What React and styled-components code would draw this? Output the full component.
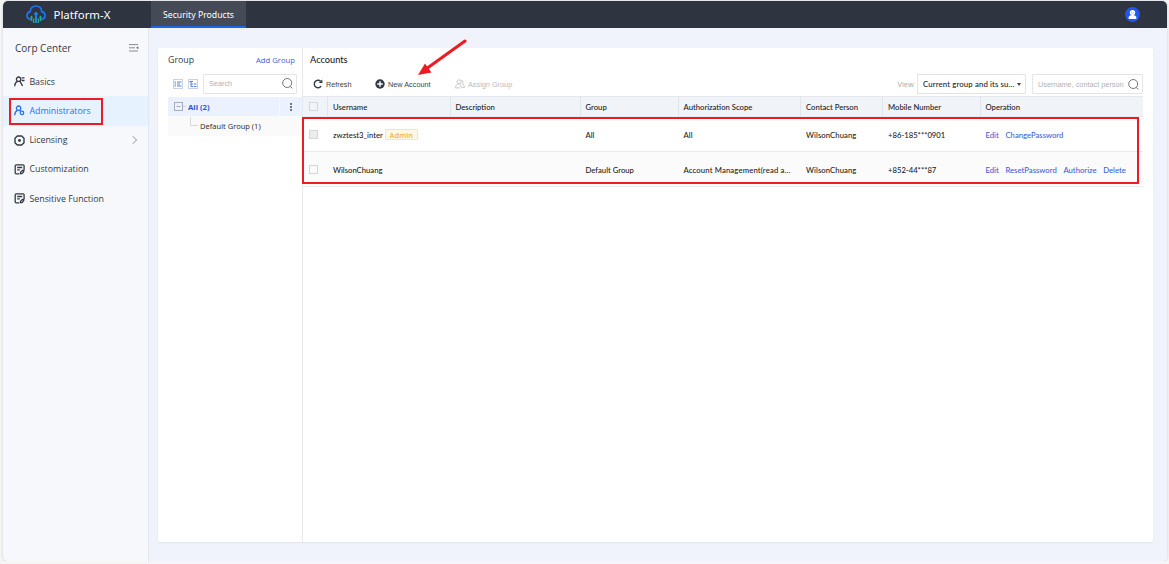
import styled, { createGlobalStyle, css } from "styled-components";

const menu = [
  { name: "Basics", icon: "basics" },
  { name: "Administrators", icon: "admin", active: true },
  { name: "Licensing", icon: "license", more: true },
  { name: "Customization", icon: "note" },
  { name: "Sensitive Function", icon: "note" },
];

const headers = [
  "Username",
  "Description",
  "Group",
  "Authorization Scope",
  "Contact Person",
  "Mobile Number",
  "Operation",
];

const accounts = [
  {
    username: "zwztest3_inter",
    admin: true,
    group: "All",
    scope: "All",
    contact: "WilsonChuang",
    mobile: "+86-185***0901",
    actions: ["Edit", "ChangePassword"],
  },
  {
    username: "WilsonChuang",
    group: "Default Group",
    scope: "Account Management(read a...",
    contact: "WilsonChuang",
    mobile: "+852-44***87",
    actions: ["Edit", "ResetPassword", "Authorize", "Delete"],
  },
];

const Logo = () => (
  <svg width="20" height="19" viewBox="0 0 20 19" fill="none">
    <path
      d="M4.500 14.300C2.300 13.900 1 12.400 1 10.400c0-2 1.300-3.400 3.200-3.800C4.600 3.200 6.800 1 10 1s5.400 2.200 5.800 5.600c1.900.4 3.200 1.800 3.200 3.800s-1.300 3.500-3.500 3.900"
      stroke="#1f74f5"
      strokeWidth="1.700"
      strokeLinecap="round"
    />
    <path d="M10 18V9" stroke="#2388ee" strokeWidth="1.900" />
    <path d="M7.300 9.600 10 6.600l2.700 3z" fill="#2080f5" />
    <path d="M5.500 16v-4M14.500 16v-4M7.600 18v-4.500M12.400 18v-4.500" stroke="#22a884" strokeWidth="1.500" />
    <path d="m3.700 12.400 1.800-2 1.800 2zM12.700 12.400l1.800-2 1.800 2z" fill="#22b07e" />
  </svg>
);

const MenuIcon = ({ type }) => (
  <svg width="11" height="11" viewBox="0 0 11 11" fill="none" stroke="currentColor" strokeWidth="1.300">
    {(type === "basics" || type === "admin") && (
      <>
        <circle cx="4.600" cy="3.200" r="2.200" />
        <path d="M.8 9.800c0-2.300 1-3.700 2.700-4.400" strokeLinecap="round" />
      </>
    )}
    {type === "basics" && <path d="M7.700 1.900H10.500M7.700 4.500H10.500M5.900 5.300l2.700 4.500" />}
    {type === "admin" && (
      <>
        <path d="M5.500 5.400l1 1" />
        <circle cx="8" cy="7.900" r="1.700" />
      </>
    )}
    {type === "license" && (
      <>
        <path d="M3.300 1h4.400L10 3.300v4.400L7.700 10H3.300L1 7.700V3.300z" strokeWidth="1.400" strokeLinejoin="round" />
        <circle cx="5.500" cy="5.500" r="1.400" fill="currentColor" stroke="none" />
      </>
    )}
    {type === "note" && (
      <>
        <path d="M5 9.800H2.200q-1 0-1-1v-7q0-1 1-1h6.900q1 0 1 1v4" strokeLinecap="round" />
        <path d="M3.200 3.500h5M3.200 5.800h2.600" />
        <path d="M6.500 9.700v-1.500l2-1.700h1.200v1.300L8 9.700z" />
      </>
    )}
  </svg>
);

const CollapseIcon = () => (
  <svg width="10" height="8" viewBox="0 0 10 8" stroke="#686e78" strokeWidth=".8">
    <path d="M0 .6h9M0 3.800h6M0 7h9" />
    <path d="M9.300 2.300v3L7 3.800z" fill="#686e78" stroke="none" />
  </svg>
);

const SearchIcon = () => (
  <svg width="11" height="11" viewBox="0 0 11 11" fill="none" stroke="#666" strokeWidth=".9">
    <circle cx="5.200" cy="5" r="4.500" />
    <path d="m8.300 8.500 2.100 1.800" />
  </svg>
);

const ListIcon = ({ nested }) => (
  <svg width="10" height="10" viewBox="0 0 10 10" fill="none">
    <rect x=".5" y=".5" width="9" height="9" stroke="#ccd1dd" />
    {nested ? (
      <path d="M1.500 2.500h3.500M3 2.500v5h2M3 5h2M5.700 5h2.800M5.700 7.500h2.800" stroke="#3e65e6" strokeWidth=".85" />
    ) : (
      <path d="M1.500 3H3M4 3h4.500M1.500 7H3M4 7h4.500M1.500 5H3M4 5h3" stroke="#3e65e6" strokeWidth=".85" />
    )}
  </svg>
);

const RefreshIcon = () => (
  <svg width="10" height="10" viewBox="0 0 10 10" fill="none">
    <path d="M8.200 7.200A3.800 3.800 0 1 1 7.700 2.200" stroke="#333a44" strokeWidth="1.400" />
    <path d="M5.700 4h3.700V.4z" fill="#333a44" />
  </svg>
);

const AddIcon = () => (
  <svg width="10" height="10" viewBox="0 0 10 10">
    <circle cx="5" cy="5" r="4.700" fill="#333a44" />
    <path d="M5 2.300v5.400M2.300 5h5.400" stroke="#fff" strokeWidth="1.400" />
  </svg>
);

const AssignIcon = () => (
  <svg width="10" height="10" viewBox="0 0 10 10" fill="none" stroke="#bbb" strokeWidth=".8">
    <circle cx="4" cy="2.800" r="2" />
    <path d="M.5 8.800c.2-2.500 1.300-3.700 3.300-3.900M.5 8.900h4.800M6.200 1.200c1.900.1 2.300 2.300.9 3.300 1.400.5 2.100 1.800 2.300 4.100H7M5 5.200l1.700 3.400" />
  </svg>
);

const Avatar = () => (
  <svg width="15" height="15" viewBox="0 0 15 15">
    <circle cx="7.500" cy="7.500" r="7.400" fill="#2158ec" />
    <circle cx="7.500" cy="5.600" r="2.700" fill="#fff" />
    <path d="M3.500 11.100c0-1.900 1.600-3 4-3s4 1.100 4 3q0 .9-.8.9H4.300q-.8 0-.8-.9z" fill="#fff" />
    <path d="M6.100 5.800q1.400.9 2.800 0" stroke="#7d9cf3" strokeWidth=".7" fill="none" />
  </svg>
);

const App = () => {
  return (
    <>
      <GlobalStyle />
      <Window>
        <Header>
          <Brand>
            <Logo />
            <BrandName>Platform-X</BrandName>
          </Brand>
          <HeaderTab>Security Products</HeaderTab>
          <User>
            <Avatar />
          </User>
        </Header>
        <Body>
          <Sidebar>
            <SidebarTitle>
              Corp Center
              <CollapseIcon />
            </SidebarTitle>
            {menu.map((item) => (
              <MenuItem key={item.name} $active={item.active}>
                <MenuIcon type={item.icon} />
                <span>{item.name}</span>
                {item.more && <Chevron />}
                {item.active && <MenuHighlight />}
              </MenuItem>
            ))}
          </Sidebar>
          <Main>
            <Card>
              <GroupPanel>
                <GroupHead>
                  <GroupTitle>Group</GroupTitle>
                  <AddGroup>Add Group</AddGroup>
                </GroupHead>
                <GroupTools>
                  <ListIcon />
                  <ListIcon nested />
                  <SearchBox $width={94}>
                    Search
                    <SearchIcon />
                  </SearchBox>
                </GroupTools>
                <TreeRoot>
                  <svg width="13" height="9" viewBox="0 0 13 9" fill="none" stroke="#a9adb5">
                    <rect x=".5" y=".5" width="8" height="8" />
                    <path d="M2.500 4.500h4" />
                    <path d="M9 4.500h3" stroke="#d5d8de" />
                  </svg>
                  <b>All (2)</b>
                  <Dots>
                    <i />
                    <i />
                    <i />
                  </Dots>
                </TreeRoot>
                <TreeChild>
                  <Branch />
                  Default Group (1)
                </TreeChild>
              </GroupPanel>
              <AccountPanel>
                <AccountTitle>Accounts</AccountTitle>
                <Toolbar>
                  <ToolButton $width={62}>
                    <RefreshIcon />
                    Refresh
                  </ToolButton>
                  <ToolButton $width={80}>
                    <AddIcon />
                    New Account
                  </ToolButton>
                  <ToolButton $width={80} $disabled>
                    <AssignIcon />
                    Assign Group
                  </ToolButton>
                  <Filters>
                    <ViewLabel>View</ViewLabel>
                    <Select>
                      Current group and its su...
                      <Caret />
                    </Select>
                    <SearchBox $width={111}>
                      Username, contact person
                      <SearchIcon />
                    </SearchBox>
                  </Filters>
                </Toolbar>
                <Table>
                  <HeadRow>
                    <CheckCell>
                      <Checkbox />
                    </CheckCell>
                    {headers.map((name) => (
                      <HeadCell key={name}>{name}</HeadCell>
                    ))}
                  </HeadRow>
                  {accounts.map((account) => (
                    <Row key={account.username} $striped={!account.admin}>
                      <CheckCell>
                        <Checkbox $disabled={account.admin} />
                      </CheckCell>
                      <Cell>
                        {account.username}
                        {account.admin && <Tag>Admin</Tag>}
                      </Cell>
                      <Cell />
                      <Cell>{account.group}</Cell>
                      <Cell $spacing="0.15px">{account.scope}</Cell>
                      <Cell $spacing="0.080px">{account.contact}</Cell>
                      <Cell>{account.mobile}</Cell>
                      <Cell>
                        {account.actions.map((action) => (
                          <Action key={action}>{action}</Action>
                        ))}
                      </Cell>
                    </Row>
                  ))}
                  <TableHighlight />
                </Table>
                <Arrow width="52" height="42" viewBox="0 0 52 42">
                  <path d="M49 3 10 31" stroke="#ed1c24" strokeWidth="3" strokeLinecap="round" />
                  <path d="M2 37 9 25.500 15.500 34.500z" fill="#ed1c24" />
                </Arrow>
              </AccountPanel>
            </Card>
          </Main>
        </Body>
      </Window>
    </>
  );
};

const GlobalStyle = createGlobalStyle`
  * {
    box-sizing: border-box;
  }
  body {
    margin: 0;
    overflow: hidden;
    background: #f5f5f5;
    font-family: "Open Sans", "Noto Sans", sans-serif;
    font-size: 8.850px;
    color: #353a42;
  }
  svg {
    flex-shrink: 0;
  }
`;

const Window = styled.div`
  display: flex;
  flex-direction: column;
  width: 1164px;
  height: 560px;
  margin: 1px 0 0 3px;
  border-radius: 5px;
  overflow: hidden;
  box-shadow: 0 0 2px 1px #dfe1e6;
`;

const Header = styled.header`
  display: flex;
  height: 27px;
  background: #2e3440;
  color: #fff;
`;
const Brand = styled.div`
  display: flex;
  align-items: center;
  width: 148px;
  padding-left: 23px;
`;
const BrandName = styled.span`
  margin-left: 7.5px;
  font-family: "Noto Sans", sans-serif;
  font-size: 11.4px;
`;
const HeaderTab = styled.div`
  display: flex;
  align-items: center;
  justify-content: center;
  width: 95px;
  background: #454b56;
  border-bottom: 2px solid #1c66ed;
  padding-top: 2px;
  font-family: "Noto Sans", sans-serif;
  font-size: 8.7px;
  white-space: nowrap;
`;
const User = styled.div`
  display: flex;
  align-items: center;
  margin-left: auto;
  padding: 0 27px 0 0;
`;

const Body = styled.div`
  display: flex;
  flex: 1;
`;
const Sidebar = styled.nav`
  width: 146px;
  background: #f7f8fc;
  border-right: 1px solid #e3e6ee;
`;
const SidebarTitle = styled.div`
  display: flex;
  align-items: center;
  justify-content: space-between;
  height: 39px;
  padding: 0 9px 0 12px;
  font-size: 10px;
`;
const MenuItem = styled.div`
  position: relative;
  display: flex;
  align-items: center;
  gap: 4px;
  height: 29.25px;
  padding-left: 11.4px;
  ${(props) =>
    props.$active &&
    css`
      background: #e6f2fe;
      color: #2b6ff2;
    `}
`;
const Chevron = styled.i`
  width: 6px;
  height: 6px;
  margin: 0 12px 0 auto;
  border: solid #adb2ba;
  border-width: 1px 1px 0 0;
  transform: rotate(45deg);
`;
const MenuHighlight = styled.div`
  position: absolute;
  top: 2px;
  left: 6px;
  width: 94px;
  height: 27px;
  border: 2px solid #ed1c24;
`;

const Main = styled.main`
  flex: 1;
  padding: 20px 13px 19px 9px;
  background: #f0f3fb;
`;
const Card = styled.div`
  display: flex;
  width: 995px;
  height: 494px;
  background: #fff;
  border-radius: 2px;
  box-shadow: 0 1px 2px #e1e4eb;
`;
const GroupPanel = styled.section`
  width: 145px;
  padding-left: 10px;
  border-right: 1px solid #e7e9ed;
`;
const GroupHead = styled.div`
  display: flex;
  align-items: center;
  justify-content: space-between;
  height: 23px;
  padding-right: 7px;
`;
const GroupTitle = styled.span`
  font-size: 8.8px;
`;
const AddGroup = styled.a`
  padding-top: 1px;
  font-size: 7.7px;
  color: #3e61dc;
`;
const GroupTools = styled.div`
  display: flex;
  align-items: center;
  gap: 5px;
  height: 26px;
  padding: 0 0 1px 5px;
`;
const SearchBox = styled.div`
  display: flex;
  align-items: center;
  justify-content: space-between;
  width: ${(props) => props.$width}px;
  height: 20px;
  padding: 0 3px 0 5px;
  background: #fff;
  border: 1px solid #e5e5e8;
  border-radius: 1px;
  font-family: "Liberation Sans", sans-serif;
  font-size: 7.3px;
  color: #b2b2b2;
  white-space: nowrap;
`;
const TreeRoot = styled.div`
  display: flex;
  align-items: center;
  height: 19px;
  padding-left: 6px;
  background: #ebf1ff;
  font-size: 7.7px;
  color: #2c55d8;

  b {
    margin-left: 1px;
  }
`;
const Dots = styled.span`
  display: flex;
  flex-direction: column;
  align-items: center;
  justify-content: center;
  gap: 1px;
  width: 23px;
  height: 19px;
  margin-left: auto;
  border-left: 1px solid #f6f8ff;

  i {
    width: 2px;
    height: 2px;
    background: #777;
  }
`;
const TreeChild = styled.div`
  display: flex;
  align-items: center;
  height: 20px;
  padding-left: 22px;
  background: #fafafa;
  font-family: "Noto Sans", sans-serif;
  font-size: 7.5px;
  color: #333;
`;
const Branch = styled.i`
  width: 8px;
  height: 9px;
  margin: -9px 2px 0 0;
  border: solid #d5d8de;
  border-width: 0 0 1px 1px;
`;

const AccountPanel = styled.section`
  position: relative;
  width: 850px;
`;
const AccountTitle = styled.h1`
  height: 24px;
  margin: 0;
  padding-left: 7px;
  font-family: Lato, sans-serif;
  font-size: 9.2px;
  line-height: 24px;
  font-weight: 500;
  color: #222;
`;
const Toolbar = styled.div`
  display: flex;
  align-items: center;
  height: 24px;
  padding: 0 10px;
`;
const ToolButton = styled.div`
  display: flex;
  align-items: center;
  gap: 3px;
  width: ${(props) => props.$width}px;
  font-family: "Liberation Sans", sans-serif;
  font-size: 7.3px;
  color: ${(props) => (props.$disabled ? "#bbb" : "#444")};
  white-space: nowrap;
`;
const Filters = styled.div`
  display: flex;
  align-items: center;
  margin-left: auto;
`;
const ViewLabel = styled.span`
  margin-right: 3px;
  font-size: 7.6px;
  color: #aaa;
`;
const Select = styled.div`
  display: flex;
  align-items: center;
  justify-content: space-between;
  width: 109px;
  height: 20px;
  margin-right: 6px;
  padding: 0 4px 0 5px;
  border: 1px solid #e3e4e7;
  font-family: Lato, sans-serif;
  font-size: 7.8px;
  font-weight: 500;
  letter-spacing: 0.12px;
  color: #222;
  white-space: nowrap;
`;
const Caret = styled.i`
  border: solid transparent;
  border-width: 3px 2px 0;
  border-top-color: #444;
`;

const Table = styled.div`
  position: relative;
  width: 840px;
  font-family: Lato, sans-serif;
  font-size: 7.7px;
  font-weight: 500;
  color: #222;
`;
const Row = styled.div`
  display: grid;
  grid-template-columns: 24px 122.5px 130px 98px 122.5px 82px 97.5px 163.5px;
  height: 35px;
  align-items: center;
  background: ${(props) => (props.$striped ? "#fbfbfb" : "#fff")};
  border-bottom: 1px solid #e9eaf0;
`;
const HeadRow = styled(Row)`
  height: 21px;
  background: #f0f3f8;
  border-top: 1px solid #e5e8ef;
`;
const Cell = styled.div`
  display: flex;
  align-items: center;
  height: 100%;
  padding: 1px 0 0 6px;
  letter-spacing: ${(props) => props.$spacing || "normal"};
  white-space: nowrap;
`;
const HeadCell = styled(Cell)`
  border-left: 1px solid #e0e4eb;
  padding: 0 0 0 5px;
`;
const CheckCell = styled.div`
  padding-left: 6px;
`;
const Checkbox = styled.div`
  width: 9px;
  height: 9px;
  border: 1px solid #d5d7dc;
  background: ${(props) => (props.$disabled ? "#ececec" : "transparent")};
`;
const Tag = styled.span`
  display: flex;
  align-items: center;
  justify-content: center;
  width: 33px;
  height: 11px;
  margin-left: 2px;
  background: #fff8e5;
  border: 1px solid #ffe5ad;
  border-radius: 1px;
  font-family: "Noto Sans", sans-serif;
  font-size: 7.5px;
  color: #f6ad38;
`;
const Action = styled.a`
  margin-right: 6.7px;
  color: #3e61dc;
`;
const TableHighlight = styled.div`
  position: absolute;
  top: 21px;
  left: -1px;
  width: 837px;
  height: 67px;
  border: 2px solid #ed1c24;
`;
const Arrow = styled.svg`
  position: absolute;
  top: -10px;
  left: 113px;
`;

export default App;
